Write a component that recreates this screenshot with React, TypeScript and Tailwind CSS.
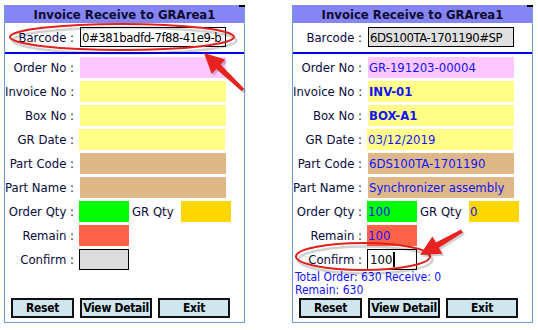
import type { ReactNode } from 'react'

type PanelData = {
  barcode: string
  barcodeBg: string
  orderNo?: string
  invoiceNo?: string
  boxNo?: string
  grDate?: string
  partCode?: string
  partName?: string
  orderQty?: string
  grQty?: string
  remain?: string
  confirm?: string
  totals?: boolean
}

const FONT = { fontFamily: '"DejaVu Sans Condensed", "DejaVu Sans", Verdana, sans-serif' }

function Row({ label, children }: { label: string; children: ReactNode }) {
  return (
    <div className="flex h-[20px] items-center">
      <div className="w-[71px] shrink-0 whitespace-nowrap pr-[2px] text-right text-[13px] leading-none text-[#0a0a3c]">
        {label}
      </div>
      {children}
    </div>
  )
}

function Box({ className, value, bold }: { className: string; value?: string; bold?: boolean }) {
  return (
    <div
      className={`ml-[4px] flex h-[21px] items-center overflow-hidden whitespace-nowrap pl-[1px] text-[13px] leading-none text-[#1212ff] ${bold ? 'font-bold' : ''} ${className}`}
    >
      {value}
    </div>
  )
}

function Btn({ label, w }: { label: string; w: string }) {
  return (
    <div
      className={`flex h-[20px] items-center justify-center whitespace-nowrap border-2 border-[#111] bg-[#cfe6ee] text-[12px] font-bold leading-none tracking-[-0.3px] text-black ${w}`}
    >
      {label}
    </div>
  )
}

function Panel({ d }: { d: PanelData }) {
  return (
    <div className="relative flex h-[318px] w-[241px] flex-col border-x border-b border-[#6c9fd8] bg-white" style={FONT}>
      <div className="absolute right-[-1px] top-0 h-[2px] w-[6px] bg-black" />
      <div className="flex h-[18px] items-center justify-center bg-[#8585f7] text-[13px] font-bold leading-none text-[#0c0c30]">
        Invoice Receive to GRArea1
      </div>
      <div className="mt-[4px] flex h-[20px] items-center">
        <div className="w-[71px] shrink-0 pr-[2px] text-right text-[13px] leading-none text-[#0a0a3c]">Barcode :</div>
        <div
          className={`ml-[4px] flex h-[20px] w-[146px] items-center overflow-hidden whitespace-nowrap border border-black pl-[1px] text-[13px] leading-none tracking-[-0.45px] text-black ${d.barcodeBg}`}
        >
          {d.barcode}
        </div>
      </div>
      <div className="mt-[5px] h-[2px] bg-[#0000ee]" />
      <div className="mt-[3px] flex flex-col gap-[4px]">
        <Row label="Order No :">
          <Box className="w-[146px] bg-[#ffc6ff]" value={d.orderNo} />
        </Row>
        <Row label="Invoice No :">
          <Box className="w-[146px] bg-[#ffff88]" value={d.invoiceNo} bold />
        </Row>
        <Row label="Box No :">
          <Box className="w-[146px] bg-[#ffff88]" value={d.boxNo} bold />
        </Row>
        <Row label="GR Date :">
          <Box className="w-[146px] -translate-x-[1px] bg-[#ffff88]" value={d.grDate} />
        </Row>
        <Row label="Part Code :">
          <Box className="w-[146px] bg-[#deb887]" value={d.partCode} />
        </Row>
        <Row label="Part Name :">
          <Box className="w-[146px] bg-[#deb887]" value={d.partName} />
        </Row>
        <Row label="Order Qty :">
          <Box className="w-[50px] -translate-x-[1px] bg-[#00ff00]" value={d.orderQty} />
          <div className="ml-[2px] text-[13px] leading-none text-[#0a0a3c]">GR Qty</div>
          <Box className="ml-auto mr-[13px] w-[50px] bg-[#ffd700]" value={d.grQty} />
        </Row>
        <Row label="Remain :">
          <Box className="w-[50px] -translate-x-[1px] bg-[#ff6347]" value={d.remain} />
        </Row>
        <Row label="Confirm :">
          {d.confirm !== undefined ? (
            <div className="ml-[3px] flex h-[21px] w-[50px] items-center border border-black bg-white pl-[2px] text-[13px] leading-none text-black">
              {d.confirm}
              <span className="ml-[1px] h-[15px] w-[2px] bg-black" />
            </div>
          ) : (
            <div className="ml-[3px] h-[21px] w-[50px] border border-black bg-[#dcdcdc]" />
          )}
        </Row>
      </div>
      {d.totals && (
        <div className="mt-[2px] pl-[2px] text-[12px] leading-[13px] text-[#1212ff]">
          <div>Total Order: 630 Receive: 0</div>
          <div>Remain: 630</div>
        </div>
      )}
      <div className="mt-auto mb-[4px] flex gap-[6px] pl-[6px]">
        <Btn label="Reset" w="w-[63px]" />
        <Btn label="View Detail" w="w-[72px]" />
        <Btn label="Exit" w="w-[72px]" />
      </div>
    </div>
  )
}

function arrow(tx: number, ty: number, hx: number, hy: number) {
  const dx = hx - tx
  const dy = hy - ty
  const len = Math.hypot(dx, dy)
  const ux = dx / len
  const uy = dy / len
  const nx = -uy
  const ny = ux
  const headLen = 20
  const headW = 10
  const shaftW = 3
  const bx = hx - ux * headLen
  const by = hy - uy * headLen
  const p = [
    [tx + nx * shaftW * 0.6, ty + ny * shaftW * 0.6],
    [bx + nx * shaftW, by + ny * shaftW],
    [bx + nx * headW, by + ny * headW],
    [hx, hy],
    [bx - nx * headW, by - ny * headW],
    [bx - nx * shaftW, by - ny * shaftW],
    [tx - nx * shaftW * 0.6, ty - ny * shaftW * 0.6],
  ]
  return p.map(([x, y]) => `${x.toFixed(1)},${y.toFixed(1)}`).join(' ')
}

export default function App() {
  const left: PanelData = { barcode: '0#381badfd-7f88-41e9-b', barcodeBg: 'bg-white' }
  const right: PanelData = {
    barcode: '6DS100TA-1701190#SP',
    barcodeBg: 'bg-[#e0e0e0]',
    orderNo: 'GR-191203-00004',
    invoiceNo: 'INV-01',
    boxNo: 'BOX-A1',
    grDate: '03/12/2019',
    partCode: '6DS100TA-1701190',
    partName: 'Synchronizer assembly',
    orderQty: '100',
    grQty: '0',
    remain: '100',
    confirm: '100',
    totals: true,
  }

  return (
    <div className="relative h-[330px] w-[538px] overflow-hidden bg-white">
      <div className="flex gap-[47px] pl-[4px] pt-[5px]">
        <Panel d={left} />
        <Panel d={right} />
      </div>

      {/* annotations */}
      <svg className="pointer-events-none absolute inset-0" width="538" height="330" viewBox="0 0 538 330">
        <ellipse cx="123" cy="38.5" rx="112" ry="13" fill="none" stroke="rgba(0,0,0,0.18)" strokeWidth="2.5" transform="translate(1.5 2)" />
        <ellipse cx="122" cy="37" rx="112" ry="13" fill="none" stroke="#e0201c" strokeWidth="2" />
        <polygon points={arrow(243, 90, 204, 53)} fill="rgba(0,0,0,0.18)" transform="translate(2 2)" />
        <polygon points={arrow(243, 90, 204, 53)} fill="#e8231f" />

        <ellipse cx="364" cy="258" rx="67" ry="13.5" fill="none" stroke="rgba(0,0,0,0.18)" strokeWidth="2.5" transform="translate(1.5 2)" />
        <ellipse cx="363" cy="256.5" rx="67" ry="13.5" fill="none" stroke="#e0201c" strokeWidth="2" />
        <polygon points={arrow(462, 231, 420, 255)} fill="rgba(0,0,0,0.18)" transform="translate(2 2)" />
        <polygon points={arrow(462, 231, 420, 255)} fill="#e8231f" />
      </svg>
    </div>
  )
}
